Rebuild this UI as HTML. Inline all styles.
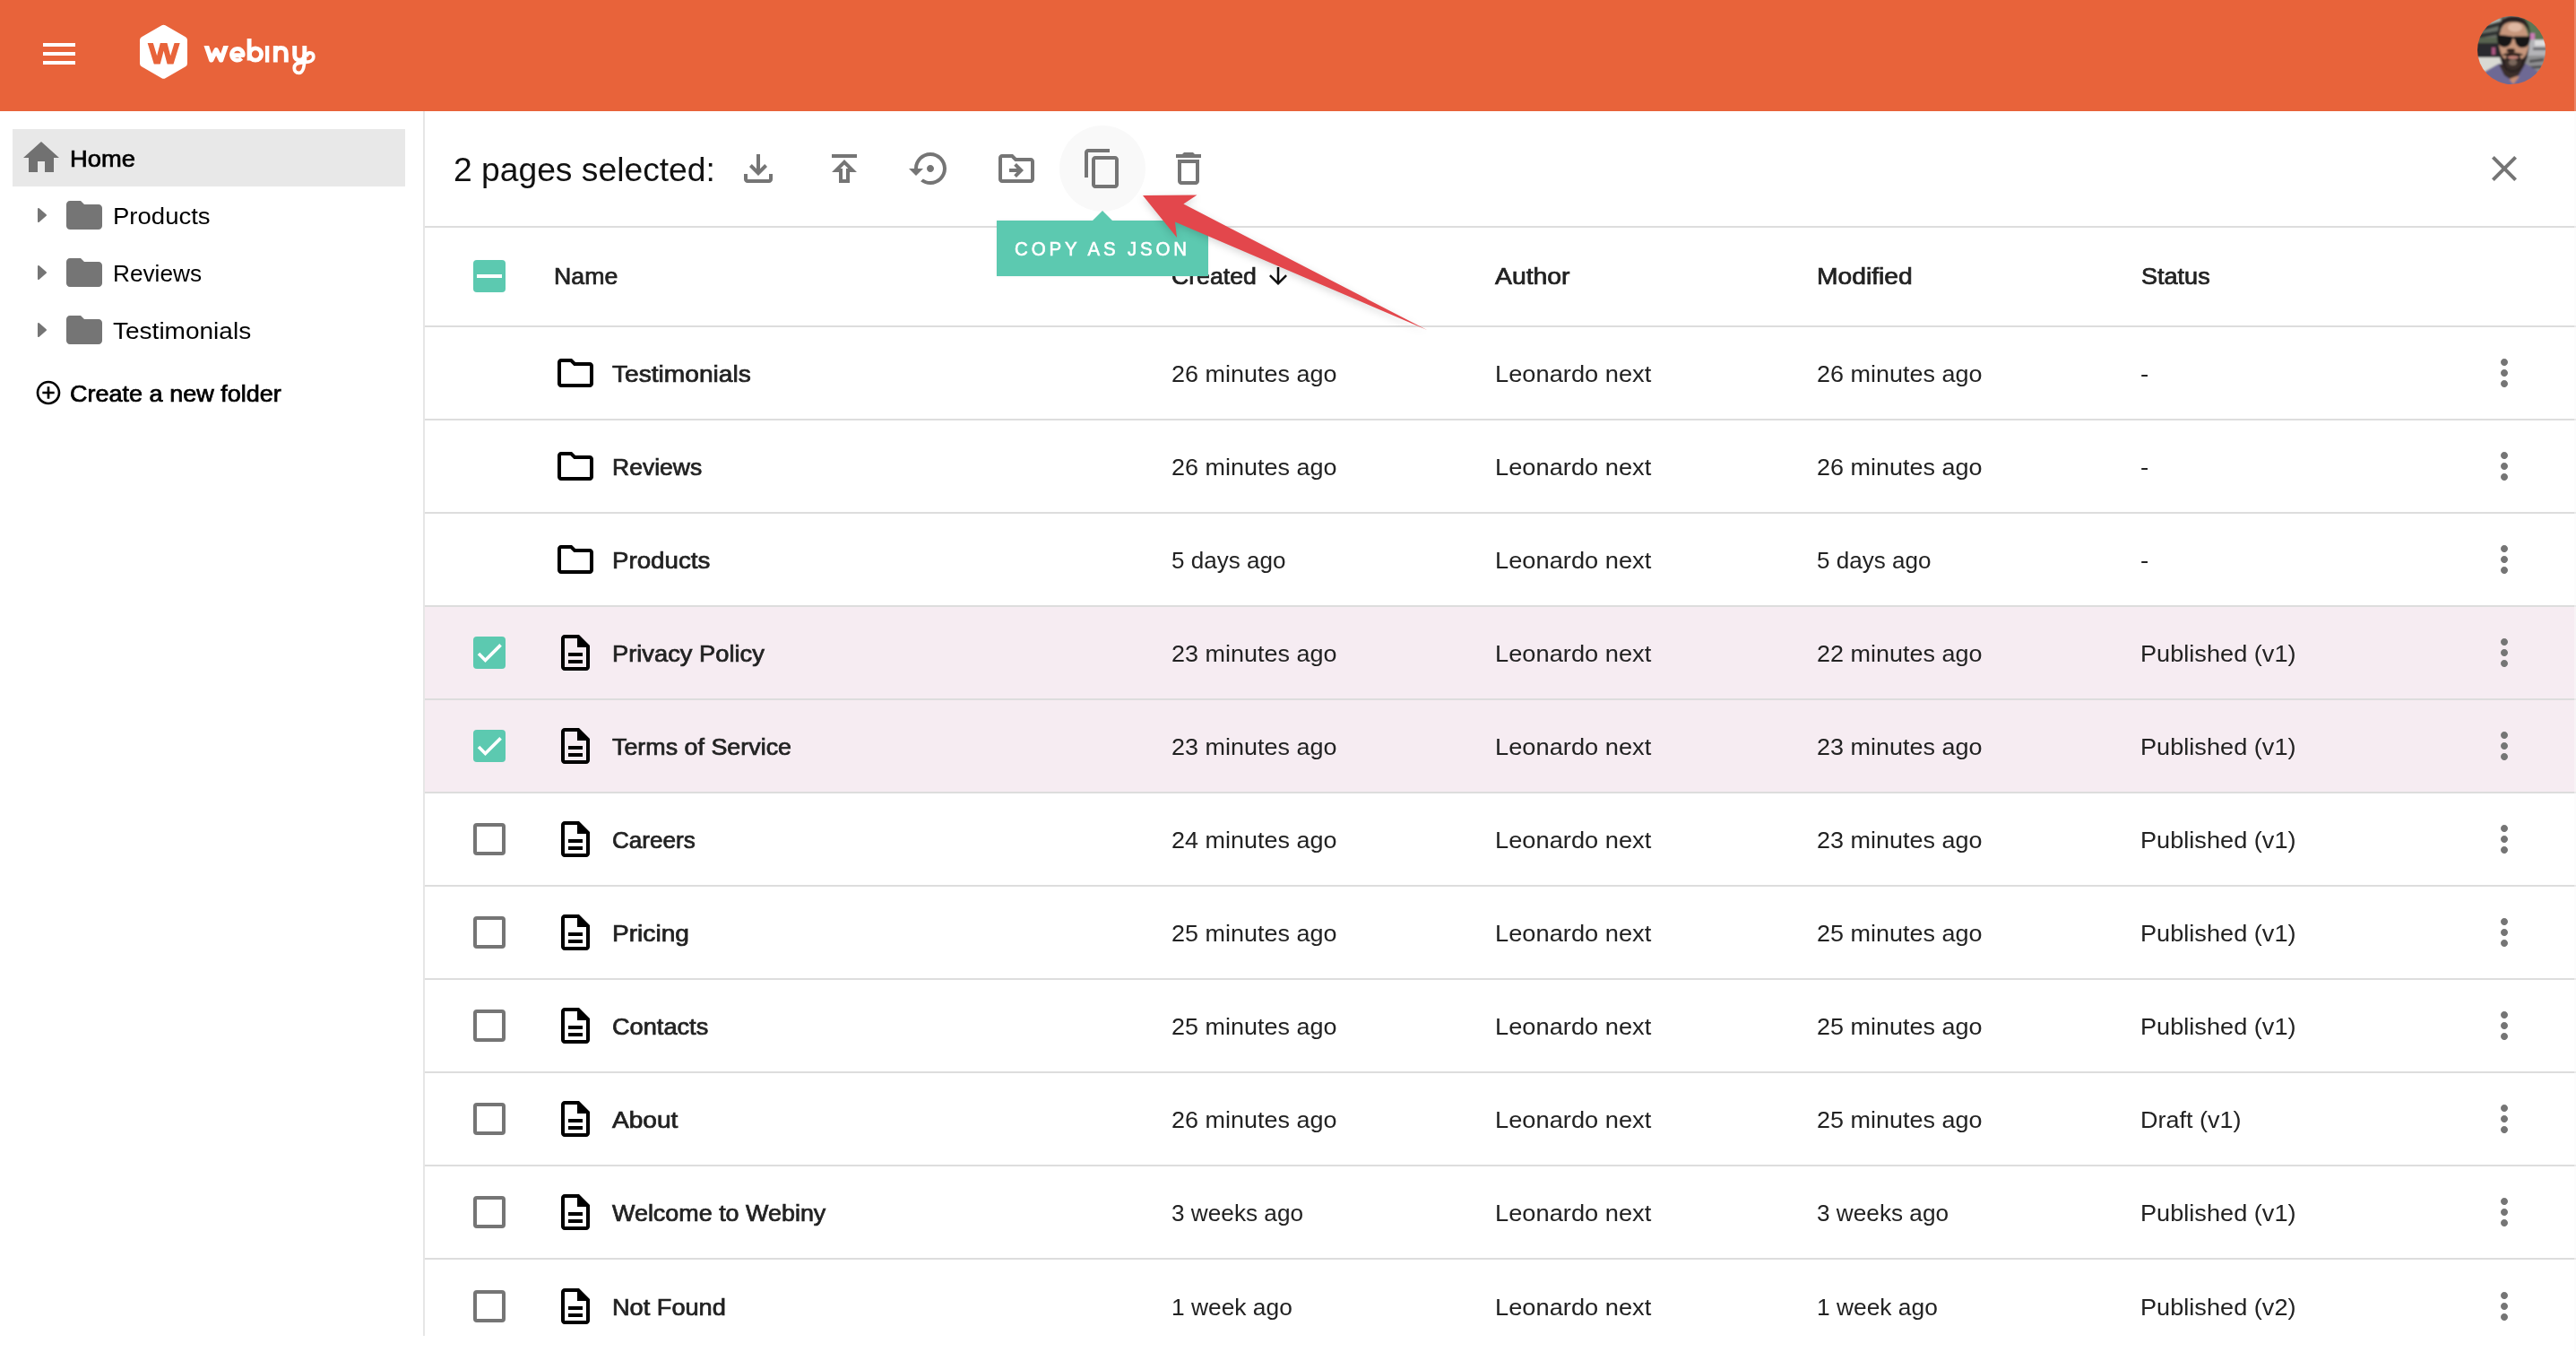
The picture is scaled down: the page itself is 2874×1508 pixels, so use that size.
<!DOCTYPE html>
<html lang="en"><head><meta charset="utf-8"><title>Webiny - Pages</title>
<style>
html,body{margin:0;padding:0;background:#fff;overflow:hidden;}
body{width:2874px;height:1508px;position:relative;overflow:hidden;font-family:"Liberation Sans", sans-serif;}
.t{position:absolute;white-space:nowrap;line-height:1;transform-origin:0 50%;display:block}
.b{position:absolute;}
.i{position:absolute;display:block;overflow:visible}
</style></head>
<body>
<header class="b" style="left:0;top:0;width:2874px;height:124px;background:#E8633A">
</header>
<div class="b" style="left:48px;top:48px;width:36px;height:4px;background:#fff;"></div>
<div class="b" style="left:48px;top:58px;width:36px;height:4px;background:#fff;"></div>
<div class="b" style="left:48px;top:68px;width:36px;height:4px;background:#fff;"></div>
<svg class="i" style="left:140px;top:10px" width="240" height="100" viewBox="140 10 240 100">
<path d="M182.500 31.750 L205.020 44.750 L205.020 70.750 L182.500 83.750 L159.980 70.750 L159.980 44.750 Z" fill="#fff" stroke="#fff" stroke-width="8" stroke-linejoin="round"/>
<clipPath id="wc"><rect x="160" y="48" width="46" height="23.500"/></clipPath>
<path clip-path="url(#wc)" d="M166.540 44 L175.300 73 L182.650 45 L190 73 L198.860 44" fill="none" stroke="#E8633A" stroke-width="5.900" stroke-linejoin="miter" stroke-miterlimit="10"/>
<clipPath id="wt"><rect x="220" y="51" width="140" height="18.700"/></clipPath>
<g fill="none" stroke="#fff" stroke-width="4.900" stroke-linecap="butt" stroke-linejoin="round">
<path clip-path="url(#wt)" d="M228.600 46 L235.700 67 L241.100 55.800 L246.600 67 L253.800 46" stroke-width="5.400"/>
<path d="M258.800 61.700 H271.200 A6.400 6.400 0 1 0 269.500 65.200" stroke-width="4.700"/>
<path d="M278.100 43 V67.500"/>
<circle cx="285" cy="60.500" r="6.600"/>
<path d="M298.100 51 V69.600" stroke-width="4.400"/>
<path d="M307.300 51 V69.600 M307.300 60 C307.300 55 310.400 53.400 313.300 53.400 C316.400 53.400 319.300 55 319.300 60 V69.600"/>
<path d="M328.700 51 V61 C328.700 65.500 331.400 67.200 334.200 67.200 C337.200 67.200 339.800 65.500 339.800 61"/>
<path d="M339.800 51 V68"/>
<path d="M339.800 64 C339.800 76 337.500 81.300 333.500 81.300 C330 81.300 328.300 78.700 328.300 76 C328.300 72.500 331 70.400 335 70 L344.500 68.900 C348 68.400 349.800 65.700 349.800 63.200 C349.800 60.600 348.200 59 346 59 C343.600 59 342.200 60.800 341.900 63.300" stroke-width="3.800"/>
</g></svg>
<svg class="i" style="left:2764px;top:18px" width="76" height="76" viewBox="0 0 76 76">
<defs><clipPath id="av"><circle cx="38" cy="38" r="38"/></clipPath>
<filter id="avb" x="-10%" y="-10%" width="120%" height="120%"><feGaussianBlur stdDeviation="0.9"/></filter></defs>
<g clip-path="url(#av)"><g filter="url(#avb)">
<rect x="-4" y="-4" width="84" height="84" fill="#8d918c"/>
<rect x="-4" y="-4" width="34" height="32" fill="#6a7068"/>
<path d="M2 12 L28 6 L28 10 L2 17Z M0 20 L26 16 L26 20 L0 25Z" fill="#2f3330"/>
<path d="M6 8 L26 2 L26 5 L6 11Z" fill="#b9bdb6"/>
<rect x="-2" y="24" width="30" height="8" fill="#59634f"/>
<rect x="-2" y="30" width="28" height="17" fill="#2a2c2f"/>
<rect x="16" y="35" width="4" height="8" fill="#a8557f"/>
<rect x="-2" y="46" width="30" height="17" fill="#d9d9d3"/>
<rect x="50" y="-4" width="30" height="30" fill="#5d7654"/>
<rect x="59" y="19" width="5" height="9" fill="#c97cb4"/>
<rect x="57" y="35" width="3" height="6" fill="#c77fae"/>
<rect x="56" y="26" width="24" height="18" fill="#b4b4b8"/>
<rect x="64" y="27" width="14" height="6" fill="#dededf"/>
<rect x="62" y="35" width="16" height="3" fill="#6a6a6e"/>
<rect x="52" y="44" width="28" height="20" fill="#8f8f91"/>
<path d="M58 49 L74 47 L74 50 L58 52Z M56 56 L72 55 L72 58 L56 59Z" fill="#4b4b4e"/>
<path d="M8 62 L24 53 L54 53 L68 62 L66 80 L10 80Z" fill="#6e6994"/>
<path d="M34 68 L40 76 L47 67 Z" fill="#c98f73"/>
<path d="M24 54 L30 66 L36 70 L46 66 L53 54Z" fill="#3a2e2b"/>
<ellipse cx="40.500" cy="30" rx="16.800" ry="27" fill="#c6967b"/>
<ellipse cx="42" cy="12.500" rx="8" ry="5" fill="#dfb8a2"/>
<path d="M23 26 C21 5 29 0 40 0 C52 0 60 5 59 28 C58 13 53 6.500 40 6.500 C28 6.500 24.500 13 23 26Z" fill="#2b2421"/>
<path d="M23.500 30 C24 52 30 63 39.500 63 C50 63 56.500 52 58 30 C56 41 53.500 46 49 48 L46 42 L34 42 L31 48 C27.500 46 25.500 41 23.500 30Z" fill="#2b2320"/>
<path d="M31 47 C33 50 37 50 39.500 50 C43 50 47 50 49 47 C50 56 46 60 39.500 60 C34 60 30 56 31 47Z" fill="#3a2f2a"/>
<ellipse cx="39.500" cy="51.500" rx="4.500" ry="3.500" fill="#7a675b"/>
<path d="M27.500 43.200 C32 39.500 47 39.500 51.500 43.200 C46 45.500 33 45.500 27.500 43.200Z" fill="#2d221e"/>
<ellipse cx="39.800" cy="46" rx="6" ry="1.700" fill="#c8857a"/>
<ellipse cx="37.300" cy="38.400" rx="4.800" ry="2.400" fill="#33211c"/>
<path d="M21.500 20.500 L38.500 22.400 L40 23.200 L41.500 22.600 L59 22.600 L58.500 28 C57.500 33 54 35.500 49.500 35.200 C45 35 42.500 31 42 27.500 L41.300 25.200 L39 25.200 L38.500 27.500 C37.500 32 34 34.800 29.500 34.500 C25 34.200 22.500 31 22 26 Z" fill="#121419"/>
</g></g></svg>
<nav>
<div class="b" style="left:14px;top:144px;width:438px;height:64px;background:#E8E8E8;"></div>
<svg class="i" style="left:22px;top:152px" width="48" height="48" viewBox="0 0 24 24" fill="#717171" ><path d="M10 20v-6h4v6h5v-8h3L12 3 2 12h3v8z"/></svg>
<span class="t" id="home" style="left:78px;top:165.00px;font-size:24.87px;font-weight:400;color:#000;transform:scaleX(1.0999);-webkit-text-stroke:0.70px #000;">Home</span>
<svg class="i" style="left:40px;top:230px" width="14" height="20" viewBox="0 0 14 20"><path d="M3 3 L11 10 L3 17 Z" fill="#757575" stroke="#757575" stroke-width="2" stroke-linejoin="round"/></svg>
<svg class="i" style="left:70px;top:216px" width="48" height="48" viewBox="0 0 24 24" fill="#757575" ><path d="M10 4H4c-1.1 0-1.99.9-1.99 2L2 18c0 1.1.9 2 2 2h16c1.1 0 2-.9 2-2V8c0-1.1-.9-2-2-2h-8l-2-2z"/></svg>
<span class="t" id="sb0" style="left:126px;top:228.00px;font-size:26.46px;font-weight:400;color:#000;transform:scaleX(1.0406);">Products</span>
<svg class="i" style="left:40px;top:294px" width="14" height="20" viewBox="0 0 14 20"><path d="M3 3 L11 10 L3 17 Z" fill="#757575" stroke="#757575" stroke-width="2" stroke-linejoin="round"/></svg>
<svg class="i" style="left:70px;top:280px" width="48" height="48" viewBox="0 0 24 24" fill="#757575" ><path d="M10 4H4c-1.1 0-1.99.9-1.99 2L2 18c0 1.1.9 2 2 2h16c1.1 0 2-.9 2-2V8c0-1.1-.9-2-2-2h-8l-2-2z"/></svg>
<span class="t" id="sb1" style="left:126px;top:292.00px;font-size:26.46px;font-weight:400;color:#000;transform:scaleX(0.9908);">Reviews</span>
<svg class="i" style="left:40px;top:358px" width="14" height="20" viewBox="0 0 14 20"><path d="M3 3 L11 10 L3 17 Z" fill="#757575" stroke="#757575" stroke-width="2" stroke-linejoin="round"/></svg>
<svg class="i" style="left:70px;top:344px" width="48" height="48" viewBox="0 0 24 24" fill="#757575" ><path d="M10 4H4c-1.1 0-1.99.9-1.99 2L2 18c0 1.1.9 2 2 2h16c1.1 0 2-.9 2-2V8c0-1.1-.9-2-2-2h-8l-2-2z"/></svg>
<span class="t" id="sb2" style="left:126px;top:356.00px;font-size:26.46px;font-weight:400;color:#000;transform:scaleX(1.0592);">Testimonials</span>
<svg class="i" style="left:38px;top:422px" width="32" height="32" viewBox="0 0 24 24" fill="#000" ><path d="M13 7h-2v4H7v2h4v4h2v-4h4v-2h-4V7zm-1-5C6.48 2 2 6.48 2 12s4.480 10 10 10 10-4.480 10-10S17.520 2 12 2zm0 18c-4.410 0-8-3.590-8-8s3.590-8 8-8 8 3.590 8 8-3.590 8-8 8z"/></svg>
<span class="t" id="newf" style="left:78.4px;top:427.00px;font-size:24.87px;font-weight:400;color:#000;transform:scaleX(1.0871);-webkit-text-stroke:0.70px #000;">Create a new folder</span>
</nav>
<main>
<div class="b" style="left:472px;top:124px;width:2px;height:1366px;background:#E6E6E6;"></div>
<span class="t" id="sel" style="left:506px;top:171.00px;font-size:37.8px;font-weight:400;color:#111;transform:scaleX(0.9850);">2 pages selected:</span>
<div class="b" style="left:1182px;top:140px;width:96px;height:96px;background:#F9F9F9;border-radius:50%"></div>
<svg class="i" style="left:822px;top:164px" width="48" height="48" viewBox="0 0 24 24" fill="#757575" ><path d="M12 16l-5-5 1.4-1.45 2.6 2.6V4h2v8.15l2.6-2.6L17 11zm-6 4q-.825 0-1.412-.587T4 18v-3h2v3h12v-3h2v3q0 .825-.587 1.413T18 20z"/></svg>
<svg class="i" style="left:918px;top:164px" width="48" height="48" viewBox="0 0 24 24" fill="#757575" ><path d="M5 4h14v2H5zm0 10h4v6h6v-6h4l-7-7-7 7zm8-2v6h-2v-6H9.830L12 9.830 14.170 12H13z"/></svg>
<svg class="i" style="left:1014px;top:164px" width="48" height="48" viewBox="0 0 24 24" fill="#757575" ><path d="M14 12c0-1.100-.9-2-2-2s-2 .9-2 2 .9 2 2 2 2-.9 2-2zm-2-9c-4.970 0-9 4.030-9 9H0l4 4 4-4H5c0-3.870 3.130-7 7-7s7 3.130 7 7-3.130 7-7 7c-1.510 0-2.910-.490-4.060-1.300l-1.420 1.440C8.040 20.300 9.940 21 12 21c4.970 0 9-4.030 9-9s-4.030-9-9-9z"/></svg>
<svg class="i" style="left:1110px;top:164px" width="48" height="48" viewBox="0 0 24 24" fill="#757575" ><path d="M20 6h-8l-2-2H4c-1.100 0-2 .9-2 2v12c0 1.100.9 2 2 2h16c1.100 0 2-.9 2-2V8c0-1.100-.9-2-2-2zm0 12H4V6h5.170l2 2H20v10zM12 17l4-4-4-4-1.400 1.400 1.600 1.600H8v2h4.200l-1.600 1.600z"/></svg>
<svg class="i" style="left:1206px;top:164px" width="48" height="48" viewBox="0 0 24 24" fill="#757575" ><path d="M16 1H4c-1.100 0-2 .9-2 2v14h2V3h12V1zm3 4H8c-1.100 0-2 .9-2 2v14c0 1.100.9 2 2 2h11c1.100 0 2-.9 2-2V7c0-1.100-.9-2-2-2zm0 16H8V7h11v14z"/></svg>
<svg class="i" style="left:1302px;top:164px" width="48" height="48" viewBox="0 0 24 24" fill="#757575" ><path d="M16 9v10H8V9h8m-1.500-6h-5l-1 1H5v2h14V4h-3.500l-1-1zM18 7H6v12c0 1.100.9 2 2 2h8c1.100 0 2-.9 2-2V7z"/></svg>
<svg class="i" style="left:2770px;top:164px" width="48" height="48" viewBox="0 0 24 24" fill="#757575" ><path d="M19 6.410L17.590 5 12 10.590 6.410 5 5 6.410 10.590 12 5 17.590 6.410 19 12 13.410 17.590 19 19 17.590 13.410 12z"/></svg>
<div class="b" style="left:474px;top:252px;width:2400px;height:2px;background:#DDDDDD;"></div>
<div class="b" style="left:528px;top:290px;width:36px;height:36px;background:#5CC9B0;border-radius:4px"></div>
<div class="b" style="left:532px;top:306px;width:28px;height:4px;background:#fff;"></div>
<span class="t" id="hName" style="left:618px;top:296.00px;font-size:24.87px;font-weight:400;color:#222222;transform:scaleX(1.0745);-webkit-text-stroke:0.70px #222222;">Name</span>
<span class="t" id="hCreated" style="left:1307.4px;top:296.00px;font-size:24.87px;font-weight:400;color:#222222;transform:scaleX(1.0722);-webkit-text-stroke:0.70px #222222;">Created</span>
<svg class="i" style="left:1411.4px;top:292.7px" width="30" height="30" viewBox="0 0 24 24" fill="#111"><path d="M20 12l-1.410-1.410L13 16.170V4h-2v12.170l-5.580-5.590L4 12l8 8 8-8z"/></svg>
<span class="t" id="hAuthor" style="left:1668.2px;top:296.00px;font-size:24.87px;font-weight:400;color:#222222;transform:scaleX(1.1404);-webkit-text-stroke:0.70px #222222;">Author</span>
<span class="t" id="hModified" style="left:2026.6px;top:296.00px;font-size:24.87px;font-weight:400;color:#222222;transform:scaleX(1.1362);-webkit-text-stroke:0.70px #222222;">Modified</span>
<span class="t" id="hStatus" style="left:2388.6px;top:296.00px;font-size:24.87px;font-weight:400;color:#222222;transform:scaleX(1.0882);-webkit-text-stroke:0.70px #222222;">Status</span>
<div class="b" style="left:474px;top:363px;width:2400px;height:2px;background:#DDDDDD;"></div>
<svg class="i" style="left:618px;top:392px" width="48" height="48" viewBox="0 0 24 24" fill="#000" ><path d="M9.170 6l2 2H20v10H4V6h5.170M10 4H4c-1.100 0-1.990.9-1.990 2L2 18c0 1.100.9 2 2 2h16c1.100 0 2-.9 2-2V8c0-1.100-.9-2-2-2h-8l-2-2z"/></svg>
<span class="t" id="n0" style="left:682.6px;top:405.00px;font-size:24.87px;font-weight:400;color:#222222;transform:scaleX(1.1319);-webkit-text-stroke:0.70px #222222;">Testimonials</span>
<span class="t" id="c0" style="left:1307.3px;top:404.00px;font-size:26.46px;font-weight:400;color:#222222;transform:scaleX(1.0194);">26 minutes ago</span>
<span class="t" id="a0" style="left:1668px;top:404.00px;font-size:26.46px;font-weight:400;color:#222222;transform:scaleX(1.0305);">Leonardo next</span>
<span class="t" id="m0" style="left:2027px;top:404.00px;font-size:26.46px;font-weight:400;color:#222222;transform:scaleX(1.0194);">26 minutes ago</span>
<span class="t" id="s0" style="left:2388px;top:404.00px;font-size:26.46px;font-weight:400;color:#222222;transform:scaleX(1.0461);">-</span>
<svg class="i" style="left:2770px;top:392px" width="48" height="48" viewBox="0 0 24 24" fill="#757575" ><path d="M12 8c1.100 0 2-.9 2-2s-.9-2-2-2-2 .9-2 2 .9 2 2 2zm0 2c-1.100 0-2 .9-2 2s.9 2 2 2 2-.9 2-2-.9-2-2-2zm0 6c-1.100 0-2 .9-2 2s.9 2 2 2 2-.9 2-2-.9-2-2-2z"/></svg>
<div class="b" style="left:474px;top:467px;width:2400px;height:2px;background:#DDDDDD;"></div>
<svg class="i" style="left:618px;top:496px" width="48" height="48" viewBox="0 0 24 24" fill="#000" ><path d="M9.170 6l2 2H20v10H4V6h5.170M10 4H4c-1.100 0-1.990.9-1.990 2L2 18c0 1.100.9 2 2 2h16c1.100 0 2-.9 2-2V8c0-1.100-.9-2-2-2h-8l-2-2z"/></svg>
<span class="t" id="n1" style="left:682.6px;top:509.00px;font-size:24.87px;font-weight:400;color:#222222;transform:scaleX(1.0667);-webkit-text-stroke:0.70px #222222;">Reviews</span>
<span class="t" id="c1" style="left:1307.3px;top:508.00px;font-size:26.46px;font-weight:400;color:#222222;transform:scaleX(1.0194);">26 minutes ago</span>
<span class="t" id="a1" style="left:1668px;top:508.00px;font-size:26.46px;font-weight:400;color:#222222;transform:scaleX(1.0305);">Leonardo next</span>
<span class="t" id="m1" style="left:2027px;top:508.00px;font-size:26.46px;font-weight:400;color:#222222;transform:scaleX(1.0194);">26 minutes ago</span>
<span class="t" id="s1" style="left:2388px;top:508.00px;font-size:26.46px;font-weight:400;color:#222222;transform:scaleX(1.0461);">-</span>
<svg class="i" style="left:2770px;top:496px" width="48" height="48" viewBox="0 0 24 24" fill="#757575" ><path d="M12 8c1.100 0 2-.9 2-2s-.9-2-2-2-2 .9-2 2 .9 2 2 2zm0 2c-1.100 0-2 .9-2 2s.9 2 2 2 2-.9 2-2-.9-2-2-2zm0 6c-1.100 0-2 .9-2 2s.9 2 2 2 2-.9 2-2-.9-2-2-2z"/></svg>
<div class="b" style="left:474px;top:571px;width:2400px;height:2px;background:#DDDDDD;"></div>
<svg class="i" style="left:618px;top:600px" width="48" height="48" viewBox="0 0 24 24" fill="#000" ><path d="M9.170 6l2 2H20v10H4V6h5.170M10 4H4c-1.100 0-1.990.9-1.990 2L2 18c0 1.100.9 2 2 2h16c1.100 0 2-.9 2-2V8c0-1.100-.9-2-2-2h-8l-2-2z"/></svg>
<span class="t" id="n2" style="left:682.6px;top:613.00px;font-size:24.87px;font-weight:400;color:#222222;transform:scaleX(1.1137);-webkit-text-stroke:0.70px #222222;">Products</span>
<span class="t" id="c2" style="left:1307.3px;top:612.00px;font-size:26.46px;font-weight:400;color:#222222;transform:scaleX(0.9858);">5 days ago</span>
<span class="t" id="a2" style="left:1668px;top:612.00px;font-size:26.46px;font-weight:400;color:#222222;transform:scaleX(1.0305);">Leonardo next</span>
<span class="t" id="m2" style="left:2027px;top:612.00px;font-size:26.46px;font-weight:400;color:#222222;transform:scaleX(0.9858);">5 days ago</span>
<span class="t" id="s2" style="left:2388px;top:612.00px;font-size:26.46px;font-weight:400;color:#222222;transform:scaleX(1.0461);">-</span>
<svg class="i" style="left:2770px;top:600px" width="48" height="48" viewBox="0 0 24 24" fill="#757575" ><path d="M12 8c1.100 0 2-.9 2-2s-.9-2-2-2-2 .9-2 2 .9 2 2 2zm0 2c-1.100 0-2 .9-2 2s.9 2 2 2 2-.9 2-2-.9-2-2-2zm0 6c-1.100 0-2 .9-2 2s.9 2 2 2 2-.9 2-2-.9-2-2-2z"/></svg>
<div class="b" style="left:474px;top:675px;width:2400px;height:2px;background:#DDDDDD;"></div>
<div class="b" style="left:474px;top:677px;width:2400px;height:102px;background:#F6ECF2;"></div>
<div class="b" style="left:528px;top:710px;width:36px;height:36px;background:#5CC9B0;border-radius:4px"></div>
<svg class="i" style="left:532px;top:714px" width="28" height="28" viewBox="0 0 24 24" fill="none" stroke="#fff" stroke-width="3.12"><path d="M1.730,12.910 8.100,19.280 22.790,4.590"/></svg>
<svg class="i" style="left:618px;top:704px" width="48" height="48" viewBox="0 0 24 24" fill="#000" ><path d="M8 16h8v2H8zm0-4h8v2H8zm6-10H6c-1.100 0-2 .9-2 2v16c0 1.100.890 2 1.990 2H18c1.100 0 2-.9 2-2V8l-6-6zm4 18H6V4h7v5h5v11z"/></svg>
<span class="t" id="n3" style="left:682.6px;top:717.00px;font-size:24.87px;font-weight:400;color:#222222;transform:scaleX(1.0980);-webkit-text-stroke:0.70px #222222;">Privacy Policy</span>
<span class="t" id="c3" style="left:1307.3px;top:716.00px;font-size:26.46px;font-weight:400;color:#222222;transform:scaleX(1.0194);">23 minutes ago</span>
<span class="t" id="a3" style="left:1668px;top:716.00px;font-size:26.46px;font-weight:400;color:#222222;transform:scaleX(1.0305);">Leonardo next</span>
<span class="t" id="m3" style="left:2027px;top:716.00px;font-size:26.46px;font-weight:400;color:#222222;transform:scaleX(1.0194);">22 minutes ago</span>
<span class="t" id="s3" style="left:2388px;top:716.00px;font-size:26.46px;font-weight:400;color:#222222;transform:scaleX(1.0263);">Published (v1)</span>
<svg class="i" style="left:2770px;top:704px" width="48" height="48" viewBox="0 0 24 24" fill="#757575" ><path d="M12 8c1.100 0 2-.9 2-2s-.9-2-2-2-2 .9-2 2 .9 2 2 2zm0 2c-1.100 0-2 .9-2 2s.9 2 2 2 2-.9 2-2-.9-2-2-2zm0 6c-1.100 0-2 .9-2 2s.9 2 2 2 2-.9 2-2-.9-2-2-2z"/></svg>
<div class="b" style="left:474px;top:779px;width:2400px;height:2px;background:#DDDDDD;"></div>
<div class="b" style="left:474px;top:781px;width:2400px;height:102px;background:#F6ECF2;"></div>
<div class="b" style="left:528px;top:814px;width:36px;height:36px;background:#5CC9B0;border-radius:4px"></div>
<svg class="i" style="left:532px;top:818px" width="28" height="28" viewBox="0 0 24 24" fill="none" stroke="#fff" stroke-width="3.12"><path d="M1.730,12.910 8.100,19.280 22.790,4.590"/></svg>
<svg class="i" style="left:618px;top:808px" width="48" height="48" viewBox="0 0 24 24" fill="#000" ><path d="M8 16h8v2H8zm0-4h8v2H8zm6-10H6c-1.100 0-2 .9-2 2v16c0 1.100.890 2 1.990 2H18c1.100 0 2-.9 2-2V8l-6-6zm4 18H6V4h7v5h5v11z"/></svg>
<span class="t" id="n4" style="left:682.6px;top:821.00px;font-size:24.87px;font-weight:400;color:#222222;transform:scaleX(1.0804);-webkit-text-stroke:0.70px #222222;">Terms of Service</span>
<span class="t" id="c4" style="left:1307.3px;top:820.00px;font-size:26.46px;font-weight:400;color:#222222;transform:scaleX(1.0194);">23 minutes ago</span>
<span class="t" id="a4" style="left:1668px;top:820.00px;font-size:26.46px;font-weight:400;color:#222222;transform:scaleX(1.0305);">Leonardo next</span>
<span class="t" id="m4" style="left:2027px;top:820.00px;font-size:26.46px;font-weight:400;color:#222222;transform:scaleX(1.0194);">23 minutes ago</span>
<span class="t" id="s4" style="left:2388px;top:820.00px;font-size:26.46px;font-weight:400;color:#222222;transform:scaleX(1.0263);">Published (v1)</span>
<svg class="i" style="left:2770px;top:808px" width="48" height="48" viewBox="0 0 24 24" fill="#757575" ><path d="M12 8c1.100 0 2-.9 2-2s-.9-2-2-2-2 .9-2 2 .9 2 2 2zm0 2c-1.100 0-2 .9-2 2s.9 2 2 2 2-.9 2-2-.9-2-2-2zm0 6c-1.100 0-2 .9-2 2s.9 2 2 2 2-.9 2-2-.9-2-2-2z"/></svg>
<div class="b" style="left:474px;top:883px;width:2400px;height:2px;background:#DDDDDD;"></div>
<div class="b" style="left:528px;top:918px;width:36px;height:36px;background:transparent;box-sizing:border-box;border:4px solid #757575;border-radius:4px"></div>
<svg class="i" style="left:618px;top:912px" width="48" height="48" viewBox="0 0 24 24" fill="#000" ><path d="M8 16h8v2H8zm0-4h8v2H8zm6-10H6c-1.100 0-2 .9-2 2v16c0 1.100.890 2 1.990 2H18c1.100 0 2-.9 2-2V8l-6-6zm4 18H6V4h7v5h5v11z"/></svg>
<span class="t" id="n5" style="left:682.6px;top:925.00px;font-size:24.87px;font-weight:400;color:#222222;transform:scaleX(1.0497);-webkit-text-stroke:0.70px #222222;">Careers</span>
<span class="t" id="c5" style="left:1307.3px;top:924.00px;font-size:26.46px;font-weight:400;color:#222222;transform:scaleX(1.0194);">24 minutes ago</span>
<span class="t" id="a5" style="left:1668px;top:924.00px;font-size:26.46px;font-weight:400;color:#222222;transform:scaleX(1.0305);">Leonardo next</span>
<span class="t" id="m5" style="left:2027px;top:924.00px;font-size:26.46px;font-weight:400;color:#222222;transform:scaleX(1.0194);">23 minutes ago</span>
<span class="t" id="s5" style="left:2388px;top:924.00px;font-size:26.46px;font-weight:400;color:#222222;transform:scaleX(1.0263);">Published (v1)</span>
<svg class="i" style="left:2770px;top:912px" width="48" height="48" viewBox="0 0 24 24" fill="#757575" ><path d="M12 8c1.100 0 2-.9 2-2s-.9-2-2-2-2 .9-2 2 .9 2 2 2zm0 2c-1.100 0-2 .9-2 2s.9 2 2 2 2-.9 2-2-.9-2-2-2zm0 6c-1.100 0-2 .9-2 2s.9 2 2 2 2-.9 2-2-.9-2-2-2z"/></svg>
<div class="b" style="left:474px;top:987px;width:2400px;height:2px;background:#DDDDDD;"></div>
<div class="b" style="left:528px;top:1022px;width:36px;height:36px;background:transparent;box-sizing:border-box;border:4px solid #757575;border-radius:4px"></div>
<svg class="i" style="left:618px;top:1016px" width="48" height="48" viewBox="0 0 24 24" fill="#000" ><path d="M8 16h8v2H8zm0-4h8v2H8zm6-10H6c-1.100 0-2 .9-2 2v16c0 1.100.890 2 1.990 2H18c1.100 0 2-.9 2-2V8l-6-6zm4 18H6V4h7v5h5v11z"/></svg>
<span class="t" id="n6" style="left:682.6px;top:1029.00px;font-size:24.87px;font-weight:400;color:#222222;transform:scaleX(1.1306);-webkit-text-stroke:0.70px #222222;">Pricing</span>
<span class="t" id="c6" style="left:1307.3px;top:1028.00px;font-size:26.46px;font-weight:400;color:#222222;transform:scaleX(1.0194);">25 minutes ago</span>
<span class="t" id="a6" style="left:1668px;top:1028.00px;font-size:26.46px;font-weight:400;color:#222222;transform:scaleX(1.0305);">Leonardo next</span>
<span class="t" id="m6" style="left:2027px;top:1028.00px;font-size:26.46px;font-weight:400;color:#222222;transform:scaleX(1.0194);">25 minutes ago</span>
<span class="t" id="s6" style="left:2388px;top:1028.00px;font-size:26.46px;font-weight:400;color:#222222;transform:scaleX(1.0263);">Published (v1)</span>
<svg class="i" style="left:2770px;top:1016px" width="48" height="48" viewBox="0 0 24 24" fill="#757575" ><path d="M12 8c1.100 0 2-.9 2-2s-.9-2-2-2-2 .9-2 2 .9 2 2 2zm0 2c-1.100 0-2 .9-2 2s.9 2 2 2 2-.9 2-2-.9-2-2-2zm0 6c-1.100 0-2 .9-2 2s.9 2 2 2 2-.9 2-2-.9-2-2-2z"/></svg>
<div class="b" style="left:474px;top:1091px;width:2400px;height:2px;background:#DDDDDD;"></div>
<div class="b" style="left:528px;top:1126px;width:36px;height:36px;background:transparent;box-sizing:border-box;border:4px solid #757575;border-radius:4px"></div>
<svg class="i" style="left:618px;top:1120px" width="48" height="48" viewBox="0 0 24 24" fill="#000" ><path d="M8 16h8v2H8zm0-4h8v2H8zm6-10H6c-1.100 0-2 .9-2 2v16c0 1.100.890 2 1.990 2H18c1.100 0 2-.9 2-2V8l-6-6zm4 18H6V4h7v5h5v11z"/></svg>
<span class="t" id="n7" style="left:682.6px;top:1133.00px;font-size:24.87px;font-weight:400;color:#222222;transform:scaleX(1.0930);-webkit-text-stroke:0.70px #222222;">Contacts</span>
<span class="t" id="c7" style="left:1307.3px;top:1132.00px;font-size:26.46px;font-weight:400;color:#222222;transform:scaleX(1.0194);">25 minutes ago</span>
<span class="t" id="a7" style="left:1668px;top:1132.00px;font-size:26.46px;font-weight:400;color:#222222;transform:scaleX(1.0305);">Leonardo next</span>
<span class="t" id="m7" style="left:2027px;top:1132.00px;font-size:26.46px;font-weight:400;color:#222222;transform:scaleX(1.0194);">25 minutes ago</span>
<span class="t" id="s7" style="left:2388px;top:1132.00px;font-size:26.46px;font-weight:400;color:#222222;transform:scaleX(1.0263);">Published (v1)</span>
<svg class="i" style="left:2770px;top:1120px" width="48" height="48" viewBox="0 0 24 24" fill="#757575" ><path d="M12 8c1.100 0 2-.9 2-2s-.9-2-2-2-2 .9-2 2 .9 2 2 2zm0 2c-1.100 0-2 .9-2 2s.9 2 2 2 2-.9 2-2-.9-2-2-2zm0 6c-1.100 0-2 .9-2 2s.9 2 2 2 2-.9 2-2-.9-2-2-2z"/></svg>
<div class="b" style="left:474px;top:1195px;width:2400px;height:2px;background:#DDDDDD;"></div>
<div class="b" style="left:528px;top:1230px;width:36px;height:36px;background:transparent;box-sizing:border-box;border:4px solid #757575;border-radius:4px"></div>
<svg class="i" style="left:618px;top:1224px" width="48" height="48" viewBox="0 0 24 24" fill="#000" ><path d="M8 16h8v2H8zm0-4h8v2H8zm6-10H6c-1.100 0-2 .9-2 2v16c0 1.100.890 2 1.990 2H18c1.100 0 2-.9 2-2V8l-6-6zm4 18H6V4h7v5h5v11z"/></svg>
<span class="t" id="n8" style="left:682.6px;top:1237.00px;font-size:24.87px;font-weight:400;color:#222222;transform:scaleX(1.1296);-webkit-text-stroke:0.70px #222222;">About</span>
<span class="t" id="c8" style="left:1307.3px;top:1236.00px;font-size:26.46px;font-weight:400;color:#222222;transform:scaleX(1.0194);">26 minutes ago</span>
<span class="t" id="a8" style="left:1668px;top:1236.00px;font-size:26.46px;font-weight:400;color:#222222;transform:scaleX(1.0305);">Leonardo next</span>
<span class="t" id="m8" style="left:2027px;top:1236.00px;font-size:26.46px;font-weight:400;color:#222222;transform:scaleX(1.0194);">25 minutes ago</span>
<span class="t" id="s8" style="left:2388px;top:1236.00px;font-size:26.46px;font-weight:400;color:#222222;transform:scaleX(1.0214);">Draft (v1)</span>
<svg class="i" style="left:2770px;top:1224px" width="48" height="48" viewBox="0 0 24 24" fill="#757575" ><path d="M12 8c1.100 0 2-.9 2-2s-.9-2-2-2-2 .9-2 2 .9 2 2 2zm0 2c-1.100 0-2 .9-2 2s.9 2 2 2 2-.9 2-2-.9-2-2-2zm0 6c-1.100 0-2 .9-2 2s.9 2 2 2 2-.9 2-2-.9-2-2-2z"/></svg>
<div class="b" style="left:474px;top:1299px;width:2400px;height:2px;background:#DDDDDD;"></div>
<div class="b" style="left:528px;top:1334px;width:36px;height:36px;background:transparent;box-sizing:border-box;border:4px solid #757575;border-radius:4px"></div>
<svg class="i" style="left:618px;top:1328px" width="48" height="48" viewBox="0 0 24 24" fill="#000" ><path d="M8 16h8v2H8zm0-4h8v2H8zm6-10H6c-1.100 0-2 .9-2 2v16c0 1.100.890 2 1.990 2H18c1.100 0 2-.9 2-2V8l-6-6zm4 18H6V4h7v5h5v11z"/></svg>
<span class="t" id="n9" style="left:682.6px;top:1341.00px;font-size:24.87px;font-weight:400;color:#222222;transform:scaleX(1.0825);-webkit-text-stroke:0.70px #222222;">Welcome to Webiny</span>
<span class="t" id="c9" style="left:1307.3px;top:1340.00px;font-size:26.46px;font-weight:400;color:#222222;transform:scaleX(0.9899);">3 weeks ago</span>
<span class="t" id="a9" style="left:1668px;top:1340.00px;font-size:26.46px;font-weight:400;color:#222222;transform:scaleX(1.0305);">Leonardo next</span>
<span class="t" id="m9" style="left:2027px;top:1340.00px;font-size:26.46px;font-weight:400;color:#222222;transform:scaleX(0.9899);">3 weeks ago</span>
<span class="t" id="s9" style="left:2388px;top:1340.00px;font-size:26.46px;font-weight:400;color:#222222;transform:scaleX(1.0263);">Published (v1)</span>
<svg class="i" style="left:2770px;top:1328px" width="48" height="48" viewBox="0 0 24 24" fill="#757575" ><path d="M12 8c1.100 0 2-.9 2-2s-.9-2-2-2-2 .9-2 2 .9 2 2 2zm0 2c-1.100 0-2 .9-2 2s.9 2 2 2 2-.9 2-2-.9-2-2-2zm0 6c-1.100 0-2 .9-2 2s.9 2 2 2 2-.9 2-2-.9-2-2-2z"/></svg>
<div class="b" style="left:474px;top:1403px;width:2400px;height:2px;background:#DDDDDD;"></div>
<div class="b" style="left:528px;top:1439px;width:36px;height:36px;background:transparent;box-sizing:border-box;border:4px solid #757575;border-radius:4px"></div>
<svg class="i" style="left:618px;top:1433px" width="48" height="48" viewBox="0 0 24 24" fill="#000" ><path d="M8 16h8v2H8zm0-4h8v2H8zm6-10H6c-1.100 0-2 .9-2 2v16c0 1.100.890 2 1.990 2H18c1.100 0 2-.9 2-2V8l-6-6zm4 18H6V4h7v5h5v11z"/></svg>
<span class="t" id="n10" style="left:682.6px;top:1446.00px;font-size:24.87px;font-weight:400;color:#222222;transform:scaleX(1.0925);-webkit-text-stroke:0.70px #222222;">Not Found</span>
<span class="t" id="c10" style="left:1307.3px;top:1445.00px;font-size:26.46px;font-weight:400;color:#222222;transform:scaleX(0.9963);">1 week ago</span>
<span class="t" id="a10" style="left:1668px;top:1445.00px;font-size:26.46px;font-weight:400;color:#222222;transform:scaleX(1.0305);">Leonardo next</span>
<span class="t" id="m10" style="left:2027px;top:1445.00px;font-size:26.46px;font-weight:400;color:#222222;transform:scaleX(0.9963);">1 week ago</span>
<span class="t" id="s10" style="left:2388px;top:1445.00px;font-size:26.46px;font-weight:400;color:#222222;transform:scaleX(1.0263);">Published (v2)</span>
<svg class="i" style="left:2770px;top:1433px" width="48" height="48" viewBox="0 0 24 24" fill="#757575" ><path d="M12 8c1.100 0 2-.9 2-2s-.9-2-2-2-2 .9-2 2 .9 2 2 2zm0 2c-1.100 0-2 .9-2 2s.9 2 2 2 2-.9 2-2-.9-2-2-2zm0 6c-1.100 0-2 .9-2 2s.9 2 2 2 2-.9 2-2-.9-2-2-2z"/></svg>
<div class="b" style="left:1112px;top:246px;width:236px;height:62px;background:#5CC9B0;box-shadow:0 0 3px rgba(0,0,0,.08)"></div>
<svg class="i" style="left:1218px;top:234px" width="24" height="13" viewBox="0 0 24 13"><path d="M0 13 L12 1 L24 13Z" fill="#5CC9B0"/></svg>
<span class="t" id="tip" style="left:1132px;top:268.00px;font-size:21.32px;font-weight:400;color:#fff;letter-spacing:4.0px;transform:scaleX(0.9606);-webkit-text-stroke:0.60px #fff;">COPY AS JSON</span>
<svg class="i" style="left:1240px;top:190px;filter:drop-shadow(0 3px 4px rgba(0,0,0,.16))" width="400" height="200" viewBox="1240 190 400 200"><path d="M1275 218 L1335.500 217.600 L1320.400 227.600 L1592 368 L1311 247.500 L1313 265 Z" fill="#E3474C"/></svg>
</main>
<div class="b" style="left:2872px;top:0px;width:2px;height:124px;background:rgba(255,255,255,.22);"></div>
<div class="b" style="left:2872px;top:124px;width:2px;height:1384px;background:rgba(250,250,250,.5);"></div>
</body></html>
